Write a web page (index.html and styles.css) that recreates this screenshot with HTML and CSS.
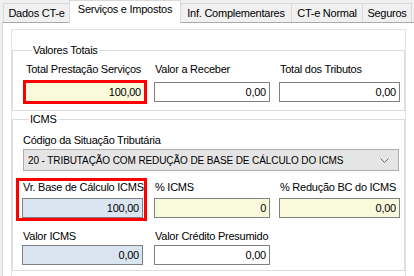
FILE: index.html
```html
<!DOCTYPE html>
<html lang="pt-BR">
<head>
    <meta charset="UTF-8">
    <title>Serviços e Impostos</title>
    <link rel="stylesheet" href="styles.css">
</head>
<body>
    <div class="tabs">
        <div class="tab tab-dados">Dados CT-e</div>
        <div class="tab tab-servicos active">Serviços e Impostos</div>
        <div class="tab tab-inf">Inf. Complementares</div>
        <div class="tab tab-normal">CT-e Normal</div>
        <div class="tab tab-seguros">Seguros</div>
    </div>

    <div class="page">
        <div class="panel">
            <fieldset class="group totals">
                <legend>Valores Totais</legend>
                <div class="row">
                    <div class="field col-a">
                        <label>Total Prestação Serviços</label>
                        <div class="input yellow marked">100,00</div>
                    </div>
                    <div class="field col-b">
                        <label>Valor a Receber</label>
                        <div class="input">0,00</div>
                    </div>
                    <div class="field col-c">
                        <label>Total dos Tributos</label>
                        <div class="input">0,00</div>
                    </div>
                </div>
            </fieldset>

            <fieldset class="group icms">
                <legend>ICMS</legend>
                <div class="field cst">
                    <label>Código da Situação Tributária</label>
                    <div class="select">
                        <span>20 - TRIBUTAÇÃO COM REDUÇÃO DE BASE DE CÁLCULO DO ICMS</span>
                        <svg width="9" height="5" viewBox="0 0 9 5"><path d="M0.5 0.5 L4.5 4.5 L8.5 0.5" fill="none" stroke="#6a6a6a" stroke-width="1"/></svg>
                    </div>
                </div>
                <div class="row row-base">
                    <div class="field col-a boxed">
                        <label>Vr. Base de Cálculo ICMS</label>
                        <div class="input blue">100,00</div>
                    </div>
                    <div class="field col-b">
                        <label>% ICMS</label>
                        <div class="input yellow">0</div>
                    </div>
                    <div class="field col-c">
                        <label>% Redução BC do ICMS</label>
                        <div class="input yellow">0,00</div>
                    </div>
                </div>
                <div class="row row-valor">
                    <div class="field col-a">
                        <label>Valor ICMS</label>
                        <div class="input blue">0,00</div>
                    </div>
                    <div class="field col-b">
                        <label>Valor Crédito Presumido</label>
                        <div class="input">0,00</div>
                    </div>
                </div>
            </fieldset>
        </div>
    </div>
</body>
</html>
```

FILE: styles.css
```css
body {
    margin: 0;
    height: 276px;
    background-color: #f0f0f0;
    font-family: "Liberation Sans", Arial, sans-serif;
    font-size: 11px;
    letter-spacing: -0.25px;
    color: #000;
    overflow: hidden;
}

/* tab strip */
.tabs {
    display: flex;
    align-items: flex-end;
    height: 22px;
    padding-left: 3px;
}
.tab {
    box-sizing: border-box;
    height: 19px;
    line-height: 18px;
    border: 1px solid #d9d9d9;
    border-bottom: none;
    background-color: #f0f0f0;
    text-align: center;
    margin-left: -1px;
}
.tab:first-child {
    margin-left: 0;
}
.tab.active {
    position: relative;
    z-index: 1;
    height: 23px;
    margin-bottom: -1px;
    line-height: 17px;
    background-color: #fff;
}
.tab-dados { width: 67px; }
.tab-servicos { width: 112px; }
.tab-inf { width: 112px; }
.tab-normal { width: 72px; }
.tab-seguros { width: 50px; }

/* page */
.page {
    box-sizing: border-box;
    height: 254px;
    margin-left: 2px;
    border-top: 1px solid #a9a9a9;
    border-left: 1px solid #d9d9d9;
    background-color: #fff;
    padding: 6px 0 0 8px;
}
.panel {
    box-sizing: border-box;
    width: 395px;
    height: 247px;
    border: 1px solid #e3e3e3;
    border-bottom: none;
    padding-top: 14px;
}

.group {
    margin: 0;
    border: 1px solid #dcdcdc;
    padding: 0;
}
.group legend {
    margin-left: 7px;
    padding: 0 1px;
    line-height: 13px;
}
.totals {
    padding: 6px 0 8px 12px;
}
.icms {
    margin-top: 2px;
    padding: 8px 0 5px 9px;
}

.row {
    display: flex;
}
.field {
    display: flex;
    flex-direction: column;
}
.field label {
    line-height: 13px;
    padding-left: 1px;
    white-space: nowrap;
}

.totals .field { gap: 6px; }
.totals .col-a { width: 120px; }
.totals .col-b { width: 116px; margin-left: 9px; }
.totals .col-c { width: 121px; margin-left: 9px; }

.icms .col-a { width: 121px; }
.icms .col-b { width: 116px; margin-left: 11px; }
.icms .col-c { width: 121px; margin-left: 9px; }

.cst {
    gap: 2px;
}
.row-base {
    margin-top: 10px;
}
.row-base .field { gap: 4px; }
.row-valor {
    margin-top: 12px;
}
.row-valor .field { gap: 2px; }

.input {
    box-sizing: border-box;
    height: 20px;
    line-height: 18px;
    border: 1px solid #7f7f7f;
    background-color: #fff;
    text-align: right;
    padding-right: 3px;
}
.input.yellow { background-color: #f9f9dc; }
.input.blue { background-color: #dae5f2; }

/* red highlight marks */
.input.marked {
    outline: 3px solid #ff0000;
    outline-offset: -1px;
}
.boxed {
    position: relative;
}
.boxed::before {
    content: "";
    position: absolute;
    top: -3px;
    left: -6px;
    right: -4px;
    bottom: -3px;
    border: 3px solid #ff0000;
}

.select {
    box-sizing: border-box;
    display: flex;
    align-items: center;
    justify-content: space-between;
    width: 376px;
    height: 22px;
    margin-left: 1px;
    padding: 0 9px 0 4px;
    border: 1px solid #adadad;
    background-color: #e5e5e5;
    font-size: 10px;
    letter-spacing: -0.1px;
}
```
